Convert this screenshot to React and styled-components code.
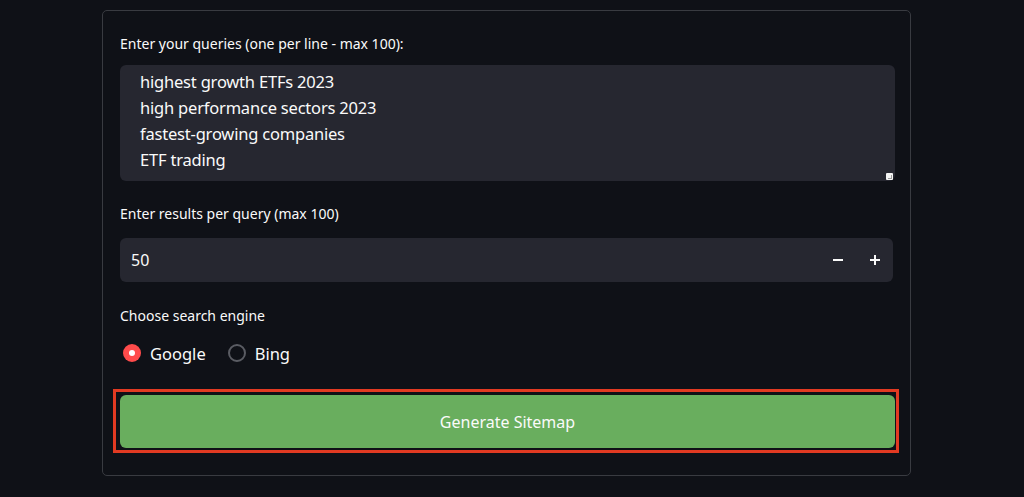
import React, { useState } from 'react';
import styled, { createGlobalStyle } from 'styled-components';

const GlobalStyle = createGlobalStyle`
    html, body {
        margin: 0;
        padding: 0;
        background-color: #0f1117;
        font-family: "Noto Sans", "Open Sans", sans-serif;
        color: #fafafa;
    }
    * {
        box-sizing: border-box;
    }
`;

const queries = [
    "highest growth ETFs 2023",
    "high performance sectors 2023",
    "fastest-growing companies",
    "ETF trading",
];

const App = () => {
    const [text, setText] = useState(queries.join("\n"));
    const [count, setCount] = useState(50);
    const [engine, setEngine] = useState("Google");

    return (
        <Page>
            <GlobalStyle />
            <Card>
                <Field $space={23}>
                    <Label $gap={11}>Enter your queries (one per line - max 100):</Label>
                    <TextWrap>
                        <TextArea value={text} onChange={(e) => setText(e.target.value)} spellCheck={false} />
                        <Resizer />
                    </TextWrap>
                </Field>

                <Field $space={24}>
                    <Label $gap={14}>Enter results per query (max 100)</Label>
                    <NumberBox>
                        <NumberInput value={count} onChange={(e) => setCount(e.target.value)} />
                        <StepButton onClick={() => setCount(Math.max(0, Number(count) - 1))}>
                            <svg width="12" height="12" viewBox="0 0 12 12">
                                <path d="M1 6h10" stroke="#fafafa" strokeWidth="2" />
                            </svg>
                        </StepButton>
                        <StepButton onClick={() => setCount(Math.min(100, Number(count) + 1))}>
                            <svg width="12" height="12" viewBox="0 0 12 12">
                                <path d="M1 6h10M6 1v10" stroke="#fafafa" strokeWidth="2" />
                            </svg>
                        </StepButton>
                    </NumberBox>
                </Field>

                <Field $space={25}>
                    <Label $gap={16}>Choose search engine</Label>
                    <RadioRow>
                        {["Google", "Bing"].map((name) => (
                            <RadioOption key={name} onClick={() => setEngine(name)}>
                                <RadioDot $checked={engine === name} />
                                {name}
                            </RadioOption>
                        ))}
                    </RadioRow>
                </Field>

                <Highlight>
                    <GenerateButton>Generate Sitemap</GenerateButton>
                </Highlight>
            </Card>
        </Page>
    );
};

export default App;

const Page = styled.div`
    width: 1024px;
    height: 497px;
    padding: 10px 0 0 102px;
    overflow: hidden;
`;

const Card = styled.div`
    width: 809px;
    height: 466px;
    border: 1px solid #393b41;
    border-radius: 5px;
    padding: 23px 15px 0 17px;
    display: flex;
    flex-direction: column;
`;

const Field = styled.div`
    display: flex;
    flex-direction: column;
    margin-bottom: ${(p) => p.$space}px;
`;

const Label = styled.label`
    font-size: 14px;
    line-height: 20px;
    color: #fafafa;
    margin-bottom: ${(p) => p.$gap}px;
`;

const TextWrap = styled.div`
    position: relative;
    width: 775px;
    height: 116px;
`;

const TextArea = styled.textarea`
    display: block;
    width: 100%;
    height: 100%;
    background-color: #262730;
    border: none;
    border-radius: 6px;
    outline: none;
    resize: none;
    color: #fafafa;
    font-family: "Noto Sans", "Open Sans", sans-serif;
    font-size: 16.5px;
    line-height: 26px;
    padding: 4px 20px;
    letter-spacing: -0.2px;
`;

const Resizer = styled.span`
    position: absolute;
    right: 2px;
    bottom: 1px;
    width: 7px;
    height: 7px;
    background-color: #f4f4f4;
    border-radius: 1px;
    &::after {
        content: "";
        position: absolute;
        right: 1px;
        bottom: 1px;
        width: 3px;
        height: 3px;
        border-right: 1px solid #9a9a9a;
        border-bottom: 1px solid #9a9a9a;
    }
`;

const NumberBox = styled.div`
    width: 773px;
    height: 44px;
    background-color: #262730;
    border-radius: 6px;
    display: flex;
    align-items: center;
    padding: 0 0 0 9px;
`;

const NumberInput = styled.input`
    flex: 1;
    background: transparent;
    border: none;
    outline: none;
    color: #fafafa;
    font-family: "Noto Sans", "Open Sans", sans-serif;
    font-size: 16px;
`;

const StepButton = styled.button`
    width: 37px;
    height: 32px;
    background: transparent;
    border: none;
    display: flex;
    align-items: center;
    justify-content: center;
    cursor: pointer;
    padding: 0;
`;

const RadioRow = styled.div`
    display: flex;
    align-items: center;
    gap: 22px;
    padding-left: 3px;
    height: 22px;
`;

const RadioOption = styled.div`
    display: flex;
    align-items: center;
    gap: 9px;
    font-size: 16.5px;
    color: #fafafa;
    cursor: pointer;
`;

const RadioDot = styled.span`
    width: 18px;
    height: 18px;
    border-radius: 50%;
    background-color: ${(p) => (p.$checked ? "#ff4b4b" : "#0f1117")};
    border: ${(p) => (p.$checked ? "none" : "2px solid #5a5c63")};
    display: flex;
    align-items: center;
    justify-content: center;
    &::after {
        content: "";
        width: 6px;
        height: 6px;
        border-radius: 50%;
        background-color: #ffffff;
        display: ${(p) => (p.$checked ? "block" : "none")};
    }
`;

const Highlight = styled.div`
    margin-left: -7px;
    width: 786px;
    height: 64px;
    border: 3px solid #e23a22;
    padding: 3px 1px 2px 4px;
`;

const GenerateButton = styled.button`
    width: 100%;
    height: 100%;
    background-color: #69ae5e;
    border: none;
    border-radius: 6px;
    color: #fafafa;
    font-family: "Noto Sans", "Open Sans", sans-serif;
    font-size: 16px;
    cursor: pointer;
`;
